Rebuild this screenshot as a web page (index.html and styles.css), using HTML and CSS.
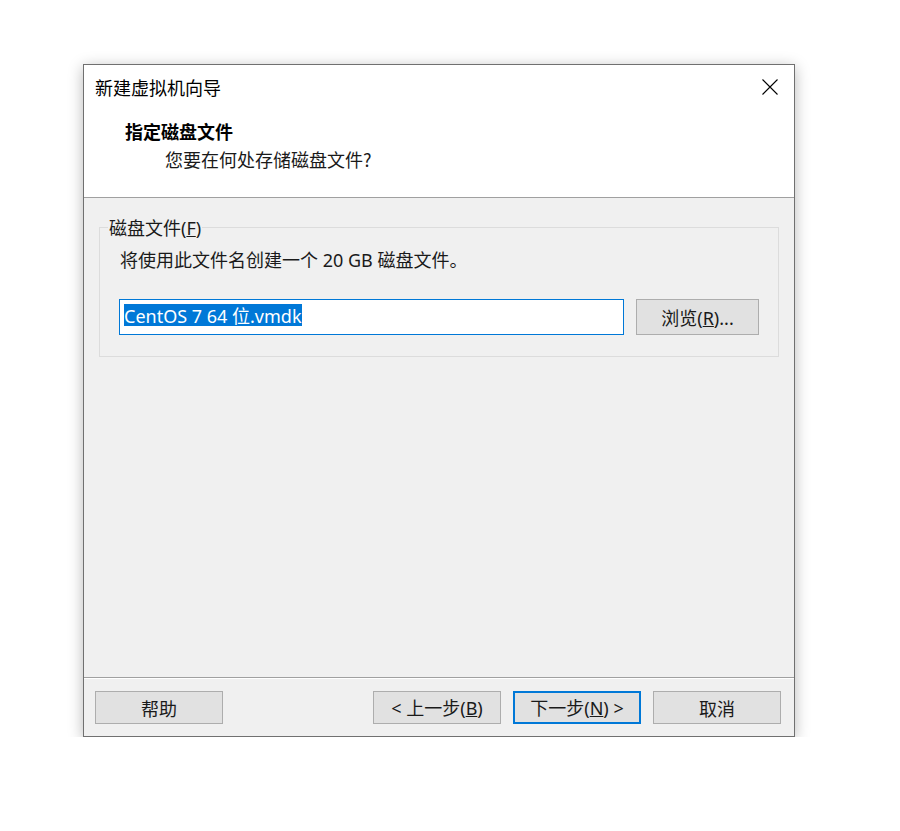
FILE: index.html
```html
<!DOCTYPE html>
<html lang="zh-CN">
<head>
<meta charset="utf-8">
<title>新建虚拟机向导</title>
<link rel="stylesheet" href="styles.css">
</head>
<body>
<div class="window">
  <div class="header">
    <div class="titlebar">
      <span class="title">新建虚拟机向导</span>
      <svg class="close" width="16" height="16" viewBox="0 0 16 16" aria-label="关闭">
        <path d="M0.5 0.5 L15.5 15.5 M15.5 0.5 L0.5 15.5" stroke="#000" stroke-width="1.1" fill="none"/>
      </svg>
    </div>
    <div class="heading">指定磁盘文件</div>
    <div class="subheading">您要在何处存储磁盘文件?</div>
  </div>
  <div class="content">
    <fieldset class="group">
      <legend>磁盘文件<span class="lat">(<u>F</u>)</span></legend>
      <p class="desc">将使用此文件名创建一个<span class="lat"> 20 GB </span>磁盘文件。</p>
      <div class="file-row">
        <div class="input"><span class="sel"><span class="lat">CentOS 7 64 </span>位<span class="lat">.vmdk</span></span></div>
        <button class="btn browse"><span>浏览<span class="lat">(<u>R</u>)...</span></span></button>
      </div>
    </fieldset>
  </div>
  <div class="footer">
    <button class="btn help"><span>帮助</span></button>
    <button class="btn"><span><span class="lat">&lt; </span>上一步<span class="lat">(<u>B</u>)</span></span></button>
    <button class="btn default"><span>下一步<span class="lat">(<u>N</u>) &gt;</span></span></button>
    <button class="btn"><span>取消</span></button>
  </div>
</div>
</body>
</html>
```

FILE: styles.css
```css
body {
  margin: 0;
  background: #fff;
  font-family: "Noto Sans CJK SC", sans-serif;
  font-size: 18px;
  color: #000;
}

.lat {
  font-family: "Noto Sans", "Noto Sans CJK SC", sans-serif;
  font-size: 18px;
}

.window {
  margin: 64px 0 0 83px;
  width: 712px;
  height: 673px;
  box-sizing: border-box;
  border: 1px solid #707070;
  background: #f0f0f0;
  display: flex;
  flex-direction: column;
  box-shadow: 0 3px 14px rgba(0, 0, 0, 0.28);
}

.header {
  background: #fff;
  height: 133px;
  box-sizing: border-box;
  border-bottom: 1px solid #a0a0a0;
  padding: 10px 16px 0 11px;
}

.titlebar {
  display: flex;
  justify-content: space-between;
  align-items: center;
  height: 24px;
  line-height: 24px;
}

.close {
  display: block;
}

.heading {
  margin: 20px 0 0 30px;
  font-weight: bold;
  line-height: 24px;
}

.subheading {
  margin: 4px 0 0 70px;
  line-height: 24px;
  color: #1a1a1a;
}

.content {
  flex: 1;
  padding: 19px 15px 0;
}

.group {
  margin: 0;
  padding: 10px 19px 21px;
  border: 1px solid #dcdcdc;
  min-width: 0;
}

.group legend {
  margin-left: -11px;
  padding: 0 1px;
  line-height: 20px;
  height: 20px;
  color: #1a1a1a;
}

.desc {
  margin: 0 0 0 1px;
  line-height: 24px;
  color: #1a1a1a;
}

.file-row {
  margin-top: 27px;
  display: flex;
  gap: 12px;
}

.input {
  flex: 1;
  height: 36px;
  box-sizing: border-box;
  border: 1px solid #0078d7;
  background: #fff;
  padding: 2px 4px 0;
}

.sel {
  display: inline-block;
  background: #0078d7;
  color: #fff;
  line-height: 22px;
  height: 22px;
}

.btn {
  font-family: "Noto Sans CJK SC", sans-serif;
  font-size: 18px;
  color: #1a1a1a;
  background: #e1e1e1;
  border: 1px solid #adadad;
  box-sizing: border-box;
  width: 128px;
  height: 33px;
  padding: 0;
  line-height: 22px;
  display: flex;
  align-items: center;
  justify-content: center;
  white-space: pre;
}

.browse {
  width: 123px;
  height: 36px;
}

.btn.default {
  border: 2px solid #0078d7;
}

.footer {
  border-top: 1px solid #a0a0a0;
  box-shadow: inset 0 1px 0 #fff;
  padding: 13px 13px 12px 11px;
  display: flex;
  gap: 12px;
}

.help {
  margin-right: auto;
}
```
